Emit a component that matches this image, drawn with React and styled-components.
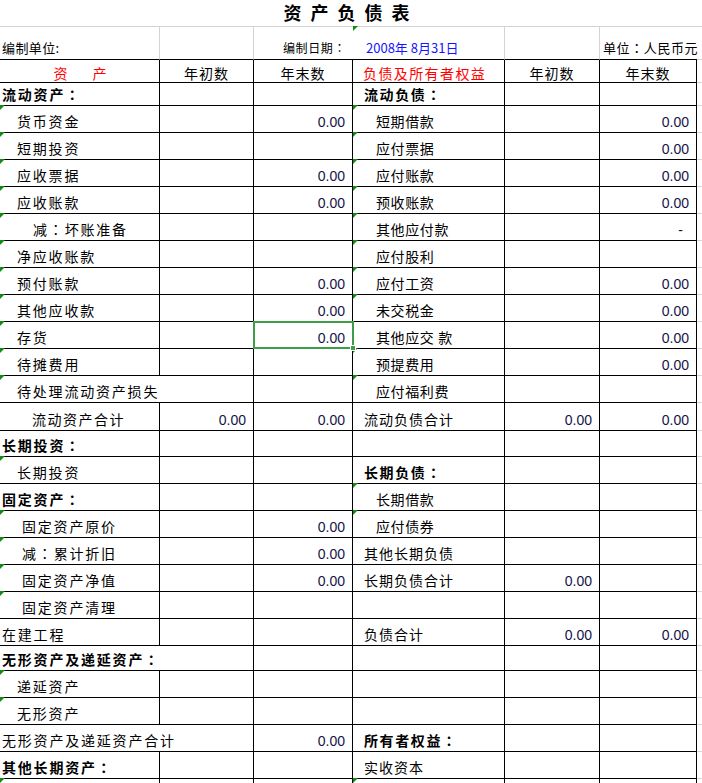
import React from 'react'
import styled, { createGlobalStyle, css } from 'styled-components'

const COLS = '160px 94px 99px 152px 95px 97px 5px'
const LINE = '#000'
const GRID = '#d4d4d4'
const FLAG = '#138a13'
const PICK = '#3c9e47'

const GlobalStyle = createGlobalStyle`
  body {
    margin: 0;
    background: #fff;
  }
`

const Sheet = styled.div`
  width: 702px;
  height: 783px;
  overflow: hidden;
  font-family: "Noto Sans CJK SC", "Noto Sans", sans-serif;
  color: #000;
`

const Row = styled.div`
  display: grid;
  grid-template-columns: ${COLS};
  height: ${p => p.h}px;
`

const TitleCell = styled.div`
  grid-column: 1 / -1;
  box-sizing: border-box;
  display: flex;
  justify-content: center;
  border-bottom: 1px solid ${GRID};
`

const Title = styled.h1`
  margin: 0;
  font-size: 18px;
  line-height: 24px;
  font-weight: 700;
  letter-spacing: 9px;
`

const Cell = styled.div`
  position: relative;
  box-sizing: border-box;
  min-width: 0;
  grid-column: span ${p => p.span || 1};
  display: flex;
  align-items: flex-end;
  justify-content: ${p => p.align || 'flex-start'};
  padding: 0 ${p => p.pr || 0}px ${p => p.pb ?? 2}px ${p => p.pl || 0}px;
  border-bottom: 1px solid ${p => p.bottom || LINE};
  border-right: ${p => (p.right === 'none' ? 'none' : `1px solid ${p.right || LINE}`)};
  white-space: nowrap;

  ${p => p.flag && css`
    &::before {
      content: '';
      position: absolute;
      left: 0;
      top: -1px;
      border-top: 5px solid ${FLAG};
      border-right: 5px solid transparent;
    }
  `}
`

const Label = styled.span`
  font-size: ${p => p.size || 14}px;
  line-height: 18px;
  font-weight: ${p => (p.bold ? 700 : 400)};
  letter-spacing: ${p => p.ls || 0}px;
  color: ${p => p.color || '#000'};
`

// full-width colon sits centred in the cell, as in the sheet's font
const Colon = styled.span`
  font-family: "Noto Sans CJK JP", "Noto Sans CJK SC", sans-serif;
`

const Amount = styled.span`
  font-family: "Liberation Sans", Arial, sans-serif;
  font-size: 14px;
  line-height: 18px;
  color: #14144a;
  margin-bottom: -1px;
`

const Pick = styled.span`
  position: absolute;
  left: -1px;
  top: -1px;
  right: -2px;
  bottom: -1px;
  border: 2px solid ${PICK};
  z-index: 2;
  pointer-events: none;

  &::after {
    content: '';
    position: absolute;
    right: -4px;
    bottom: -4px;
    width: 4px;
    height: 4px;
    background: ${PICK};
    border: 1px solid #fff;
  }
`

const withColon = text =>
  text.split('：').flatMap((part, i) => (i === 0 ? [part] : [<Colon key={i}>：</Colon>, part]))

// cell helpers
const L = (text, ind, extra = {}) => ({ text, ind, ls: 1.8, ...extra })
const R = (text, ind, extra = {}) => ({ text, ind, ls: 0.6, ...extra })
const E = {}
const N = { num: '0.00' }
const DASH = { num: '-', pr: 13 }
const M = { flag: true }
const MB = { bold: true, ls: 1.8 }
const RB = { bold: true, ls: 1.6 }

const rows = [
  { h: 23, cells: [L('流动资产：', 2, MB), E, E, R('流动负债：', 11, RB), E, E] },
  { h: 27, cells: [L('货币资金', 17, M), E, N, R('短期借款', 23, M), E, N] },
  { h: 27, cells: [L('短期投资', 17, M), E, E, R('应付票据', 23, M), E, N] },
  { h: 27, cells: [L('应收票据', 17, M), E, N, R('应付账款', 23, M), E, N] },
  { h: 27, cells: [L('应收账款', 17, M), E, N, R('预收账款', 23, M), E, N] },
  { h: 27, cells: [L('减：坏账准备', 33, M), E, E, R('其他应付款', 23, M), E, DASH] },
  { h: 27, cells: [L('净应收账款', 17, M), E, E, R('应付股利', 23, M), E, E] },
  { h: 27, cells: [L('预付账款', 17, M), E, N, R('应付工资', 23, M), E, N] },
  { h: 27, cells: [L('其他应收款', 17, M), E, N, R('未交税金', 23, M), E, N] },
  { h: 27, cells: [L('存货', 17, M), E, { ...N, pick: true }, R('其他应交 款', 23), E, N] },
  { h: 27, cells: [L('待摊费用', 17, M), E, E, R('预提费用', 23, M), E, N] },
  { h: 27, cells: [L('待处理流动资产损失', 17, { flag: true, span: 2 }), E, R('应付福利费', 23, M), E, E] },
  { h: 28, cells: [L('流动资产合计', 32, { ls: 1.5 }), N, N, R('流动负债合计', 11, { ls: 1 }), N, N] },
  { h: 26, cells: [L('长期投资：', 2, MB), E, E, E, E, E] },
  { h: 27, cells: [L('长期投资', 17, M), E, E, R('长期负债：', 11, RB), E, E] },
  { h: 27, cells: [L('固定资产：', 2, MB), E, E, R('长期借款', 23, M), E, E] },
  { h: 27, cells: [L('固定资产原价', 22, M), E, N, R('应付债券', 23, M), E, E] },
  { h: 27, cells: [L('减：累计折旧', 22, M), E, N, R('其他长期负债', 11, { ls: 1 }), E, E] },
  { h: 27, cells: [L('固定资产净值', 22, M), E, N, R('长期负债合计', 11, { ls: 1 }), N, E] },
  { h: 27, cells: [L('固定资产清理', 22, M), E, E, E, E, E] },
  { h: 27, cells: [L('在建工程', 2), E, E, R('负债合计', 11, { ls: 1 }), N, N] },
  { h: 25, cells: [L('无形资产及递延资产：', 2, { ...MB, span: 2 }), E, E, E, E] },
  { h: 27, cells: [L('递延资产', 17, M), E, E, E, E, E] },
  { h: 27, cells: [L('无形资产', 17, M), E, E, E, E, E] },
  { h: 27, cells: [L('无形资产及递延资产合计', 2, { span: 2 }), N, R('所有者权益：', 11, RB), E, E] },
  { h: 27, cells: [L('其他长期资产：', 2, MB), E, E, R('实收资本', 11, { ls: 1 }), E, E] },
  { h: 27, cells: [M, E, E, M, E, E] },
]

function BodyCell({ c }) {
  if (c.num) {
    return (
      <Cell align="flex-end" pr={c.pr || 7} pb={2}>
        <Amount>{c.num}</Amount>
        {c.pick && <Pick />}
      </Cell>
    )
  }
  return (
    <Cell span={c.span} flag={c.flag} pl={c.ind}>
      {c.text && <Label bold={c.bold} ls={c.ls}>{withColon(c.text)}</Label>}
    </Cell>
  )
}

const Filler = () => <Cell right="none" bottom={GRID} />

export default function App() {
  return (
    <Sheet>
      <GlobalStyle />
      <Row h={27}>
        <TitleCell>
          <Title>资产负债表</Title>
        </TitleCell>
      </Row>

      <Row h={33}>
        <Cell right={GRID} pl={2}>
          <Label size={13} ls={0.4}>编制单位:</Label>
        </Cell>
        <Cell right={GRID} />
        <Cell right="none" align="flex-end" pr={7}>
          <Label size={12} ls={0.6}>编制日期{<Colon>：</Colon>}</Label>
        </Cell>
        <Cell right={GRID} pl={13} flag>
          <Label size={13} color="#1414ff">2008年 8月31日</Label>
        </Cell>
        <Cell right={GRID} />
        <Cell right="none" pl={3}>
          <Label size={13} ls={0.6}>单位{<Colon>：</Colon>}人民币元</Label>
        </Cell>
        <Cell right="none" bottom={GRID} />
      </Row>

      <Row h={23}>
        <Cell align="center" pb={0}>
          <Label color="#ff0000" ls={-1}>资　　产</Label>
        </Cell>
        <Cell align="center" pb={0}>
          <Label ls={1}>年初数</Label>
        </Cell>
        <Cell align="center" pb={0}>
          <Label ls={1}>年末数</Label>
        </Cell>
        <Cell pl={10} pb={0}>
          <Label color="#ff0000" ls={1.4}>负债及所有者权益</Label>
        </Cell>
        <Cell align="center" pb={0}>
          <Label ls={1}>年初数</Label>
        </Cell>
        <Cell align="center" pb={0}>
          <Label ls={1}>年末数</Label>
        </Cell>
        <Filler />
      </Row>

      {rows.map((row, i) => (
        <Row key={i} h={row.h}>
          {row.cells.map((c, j) => (
            <BodyCell key={j} c={c} />
          ))}
          <Filler />
        </Row>
      ))}
    </Sheet>
  )
}
